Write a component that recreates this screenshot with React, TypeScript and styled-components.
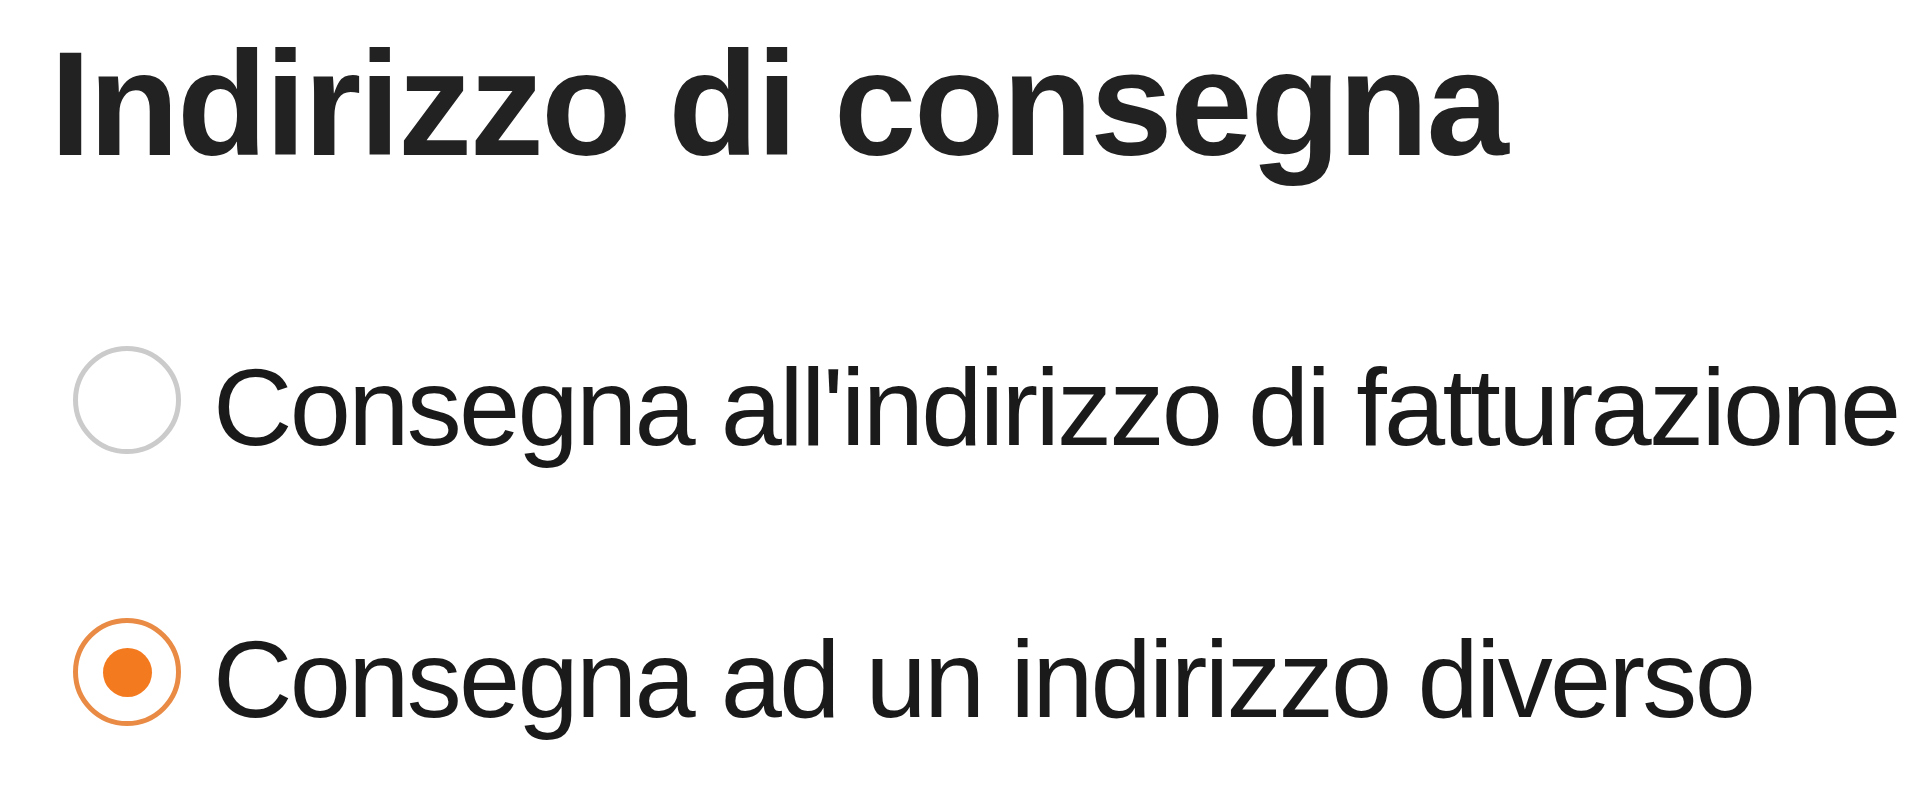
import React from 'react';

import styled, { createGlobalStyle } from 'styled-components';

const GlobalStyle = createGlobalStyle`
	html,
	body {
		margin: 0;
		padding: 0;
		background: #fff;
	}
	body {
		font-family: 'Liberation Sans', Arial, sans-serif;
		color: #222;
	}
`;

const SPage = styled.div`
	padding: 30px 0 0 50px;
`;

const STitle = styled.h2`
	margin: 0 0 168px;
	font-size: 148px;
	line-height: 1;
	font-weight: 700;
	letter-spacing: -2.3px;
	color: #222;
`;

const SOptions = styled.div`
	display: flex;
	flex-direction: column;
	gap: 150px;
	padding-left: 23px;
`;

const SOption = styled.label`
	display: flex;
	align-items: center;
	gap: 32px;
	cursor: pointer;
`;

const SRadio = styled.input.attrs({ type: 'radio' })`
	appearance: none;
	-webkit-appearance: none;
	margin: 0 0 14px;
	width: 108px;
	height: 108px;
	flex: 0 0 108px;
	box-sizing: border-box;
	border-radius: 50%;
	border: 5px solid #cbcbcb;
	background: #fff;
	display: grid;
	place-items: center;
	cursor: pointer;

	&::before {
		content: '';
		width: 49px;
		height: 49px;
		border-radius: 50%;
		background: #f47a1f;
		transform: scale(0);
	}

	&:checked {
		border-color: #e98b45;
	}

	&:checked::before {
		transform: scale(1);
	}
`;

const SLabelText = styled.span`
	font-size: 110px;
	line-height: 1;
	letter-spacing: -2.7px;
	color: #1a1a1a;
	white-space: nowrap;
`;

type Choice = {
	id: string;
	label: string;
};

const choices: Choice[] = [
	{ id: 'billing', label: "Consegna all'indirizzo di fatturazione" },
	{ id: 'other', label: 'Consegna ad un indirizzo diverso' },
];

const App: React.FC = () => {
	const [shipping, setShipping] = React.useState('other');

	return (
		<>
			<GlobalStyle />
			<SPage>
				<STitle>Indirizzo di consegna</STitle>
				<SOptions>
					{choices.map(c => (
						<SOption key={c.id}>
							<SRadio
								name="shipping"
								value={c.id}
								checked={shipping === c.id}
								onChange={() => setShipping(c.id)}
							/>
							<SLabelText>{c.label}</SLabelText>
						</SOption>
					))}
				</SOptions>
			</SPage>
		</>
	);
};

export default App;
